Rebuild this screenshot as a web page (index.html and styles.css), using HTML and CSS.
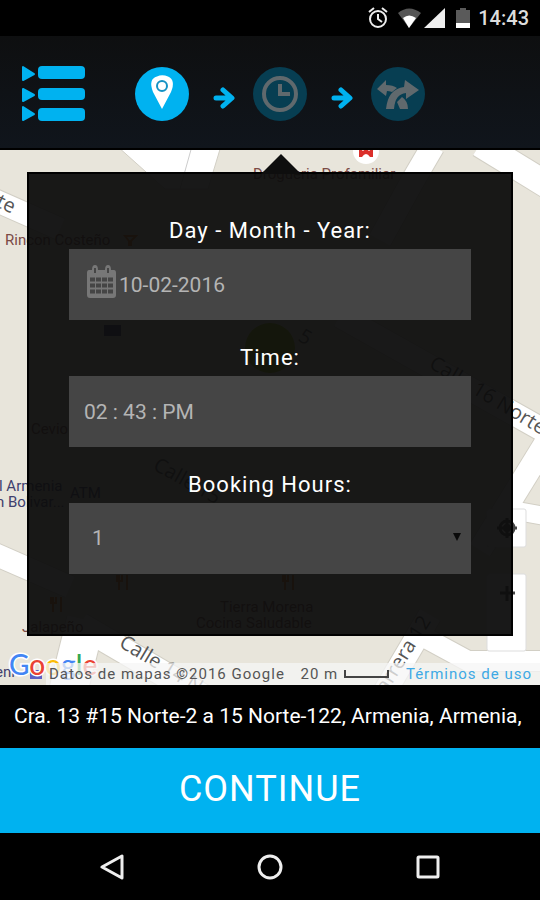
FILE: index.html
```html
<!DOCTYPE html>
<html lang="en">
<head>
    <meta charset="UTF-8">
    <meta name="viewport" content="width=device-width, initial-scale=1.0">
    <title>Booking</title>
    <link rel="stylesheet" href="styles.css">
</head>
<body>
    <div class="status-bar">
        <svg width="110" height="24" viewBox="0 0 110 24" aria-hidden="true">
            <!-- alarm -->
            <g fill="none" stroke="#eee" stroke-width="2">
                <circle cx="10" cy="13" r="8"/>
                <path d="M10 8v5l4 3M1 6l5-4M19 6l-5-4"/>
            </g>
            <!-- wifi -->
            <path d="M30 7q11-9 23 0l-12 15z" fill="#555"/>
            <path d="M35 12q6-5 13 0l-7 10z" fill="#fff"/>
            <!-- signal -->
            <path d="M56 22L77 2v20z" fill="#eee"/>
            <!-- battery -->
            <path d="M88 4h4V2h6v2h4v18H88z" fill="#5a5a5a"/>
            <path d="M88 17h14v5H88z" fill="#fff"/>
        </svg>
        <span class="clock">14:43</span>
    </div>

    <header class="top-bar">
        <button class="menu-btn" aria-label="Menu">
            <svg width="63" height="58" viewBox="0 0 63 58" fill="#00b2f0" stroke="#00b2f0" stroke-linejoin="round">
                <path d="M1 2v13l11-6zM1 24v12l11-6zM1 42v13l11-6z" stroke-width="2"/>
                <rect x="16" y="1" width="47" height="13" rx="4" stroke="none"/>
                <rect x="16" y="23" width="47" height="12" rx="4" stroke="none"/>
                <rect x="16" y="43" width="47" height="13" rx="4" stroke="none"/>
            </svg>
        </button>
        <nav class="steps">
            <button class="step active" aria-label="Location">
                <svg width="54" height="54" viewBox="0 0 54 54">
                    <path d="M27 42L18 25Q13 12 22 9.500Q27 7 33 9.500Q41 13 36 25z" fill="#fff"/>
                    <circle cx="27" cy="19" r="5" fill="#fff" stroke="#1592c4" stroke-width="2"/>
                </svg>
            </button>
            <svg class="arrow" width="22" height="32" viewBox="0 0 22 32" aria-hidden="true">
                <path d="M3 20h15M10 12l9 8-9 8" />
            </svg>
            <button class="step" aria-label="Time">
                <svg width="54" height="54" viewBox="0 0 54 54" fill="none" stroke="#60696d">
                    <circle cx="27" cy="27" r="16" stroke-width="4"/>
                    <path d="M27 17v10h10" stroke-width="4"/>
                </svg>
            </button>
            <svg class="arrow" width="22" height="32" viewBox="0 0 22 32" aria-hidden="true">
                <path d="M3 20h15M10 12l9 8-9 8" />
            </svg>
            <button class="step" aria-label="Route">
                <svg width="54" height="54" viewBox="0 0 54 54" fill="#60696d">
                    <path d="M15 42Q17 22 33 20l1-7 14 10-13 9v-6Q24 27 23 42z"/>
                    <path d="M6 22l9-9v5q7 0 11 3l-5 4q-3-1-5-1l-1 5zM31 30q6 4 6 12h-8l-3-7z"/>
                </svg>
            </button>
        </nav>
    </header>

    <main class="map-area">
        <svg class="map" viewBox="0 150 540 535" preserveAspectRatio="xMidYMid slice" aria-hidden="true">
            <path d="M117 146L165 189L208 189L221 146z" fill="#fff" stroke="#d2cfc5"/>
            <path d="M192 146l-12 43" stroke="#ccc"/>
            <g class="road-edge">
                <path d="M480 144L570 199" stroke-width="28"/>
                <path d="M433 146L412 182L380 240" stroke-width="25"/>
                <path d="M-10 198L60 229" stroke-width="24"/>
                <path d="M340 316L550 434" stroke-width="25"/>
                <path d="M560 420L480 550" stroke-width="25"/>
                <path d="M500 508L550 517" stroke-width="20"/>
                <path d="M-10 552L70 587" stroke-width="24"/>
                <path d="M86 620L66 700" stroke-width="40"/>
                <path d="M80 625L210 701" stroke-width="27"/>
                <path d="M430 615L380 700" stroke-width="25"/>
                <path d="M420 635L468 661L550 661" stroke-width="22"/>
            </g>
            <g class="road">
                <path d="M480 144L570 199" stroke-width="26"/>
                <path d="M433 146L412 182L380 240" stroke-width="23"/>
                <path d="M-10 198L60 229" stroke-width="22"/>
                <path d="M340 316L550 434" stroke-width="23"/>
                <path d="M560 420L480 550" stroke-width="23"/>
                <path d="M500 508L550 517" stroke-width="18"/>
                <path d="M-10 552L70 587" stroke-width="22"/>
                <path d="M86 620L66 700" stroke-width="38"/>
                <path d="M80 625L210 701" stroke-width="25"/>
                <path d="M430 615L380 700" stroke-width="23"/>
                <path d="M420 635L468 661L550 661" stroke-width="20"/>
            </g>

            <!-- map controls -->
            <g fill="#fff" stroke="#ddd">
                <rect x="487" y="509" width="39" height="38" rx="2"/>
                <rect x="487" y="574" width="39" height="77" rx="2"/>
            </g>
            <g fill="none" stroke="#444" stroke-width="3">
                <circle cx="507" cy="528" r="7"/>
                <path d="M507 518v20M497 528h20M500 593h15M507 586v15"/>
            </g>
            <circle cx="507" cy="528" r="4" fill="#444"/>

            <!-- places -->
            <circle cx="270" cy="348" r="25" fill="#9bc400"/>
            <circle cx="366" cy="151" r="13" fill="#fff"/>
            <path d="M359 148l4 3q3-3 6 0l4-3v9h-14z" fill="#db2f2a"/>
            <path d="M362 157q4-6 8 0z" fill="#fff"/>
            <path d="M125 236h11l-5 5v4h-2v-4zM117 575v6h5v-6m-3 0v15M127 575v15M51 597v6h5v-6m-3 0v15M61 597v15M283 575v6h5v-6m-3 0v15M293 575v15" fill="none" stroke="#e57a1c" stroke-width="2"/>
            <rect x="104" y="325" width="17" height="11" fill="#447"/>
            <rect x="30" y="670" width="12" height="9" fill="#5b5fc4"/>

            <g class="place">
                <text x="5" y="245">Rincon Costeño</text>
                <text x="253" y="179">Drogueria Profamiliar</text>
                <text x="31" y="434">Cevio</text>
                <text x="22" y="632">Jalapeño</text>
                <text x="220" y="612">Tierra Morena</text>
                <text x="196" y="628">Cocina Saludable</text>
            </g>
            <g class="place blue">
                <text x="-1" y="491">l Armenia</text>
                <text x="-4" y="507">n Bolivar...</text>
                <text x="70" y="498">ATM</text>
                <text x="-5" y="677">eni</text>
            </g>
            <g class="street">
                <text transform="translate(-5 206) rotate(25)">te</text>
                <text transform="translate(428 367) rotate(31)">Calle 16 Norte</text>
                <text transform="translate(152 469) rotate(29)">Calle 15</text>
                <text transform="translate(118 646) rotate(31)">Calle 14 N</text>
                <text transform="translate(386 694) rotate(-58)">arrera 12</text>
                <text transform="translate(297 340) rotate(30)">5</text>
            </g>
            <text class="logo" x="9" y="675"><tspan fill="#4285f4">G</tspan><tspan fill="#ea4335">o</tspan><tspan fill="#fbbc05">o</tspan><tspan fill="#4285f4">g</tspan><tspan fill="#34a853">l</tspan><tspan fill="#ea4335">e</tspan></text>
        </svg>

        <form class="booking">
            <label for="date">Day - Month - Year:</label>
            <div class="field">
                <svg class="calendar" width="31" height="34" viewBox="0 0 31 34" aria-hidden="true">
                    <path d="M3 5h3q0-5 3-5t3 5h7q0-5 3-5t3 5h3q2 0 2 3v22q0 3-3 3H4q-3 0-3-3V8q0-3 2-3z" fill="#777"/>
                    <path d="M9 3v5M22 3v5" stroke="#454545" stroke-width="2"/>
                    <path d="M4 14.500h23M4 20.500h23M4 26.500h23" stroke="#454545" stroke-width="4" stroke-dasharray="5 1"/>
                </svg>
                <input type="text" id="date" value="10-02-2016">
            </div>
            <label for="time">Time:</label>
            <div class="field">
                <input type="text" id="time" value="02 : 43 : PM">
            </div>
            <label for="hours">Booking Hours:</label>
            <div class="field hours">
                <select id="hours">
                    <option>1</option>
                    <option>2</option>
                    <option>3</option>
                </select>
                <svg width="10" height="10" viewBox="0 0 10 10" aria-hidden="true"><path d="M1 0h8L5 8z" fill="#0a0a0a"/></svg>
            </div>
        </form>

        <div class="attribution">
            <span>Datos de mapas ©2016 Google</span>
            <span class="scale">20 m
                <svg width="46" height="10" viewBox="0 0 46 10" aria-hidden="true"><path d="M1 1v7h43V1" fill="none" stroke="#444" stroke-width="2"/></svg>
            </span>
            <a href="#">Términos de uso</a>
        </div>
    </main>

    <p class="address">Cra. 13 #15 Norte-2 a 15 Norte-122, Armenia, Armenia,</p>
    <button class="continue-btn">CONTINUE</button>

    <nav class="system-nav">
        <button aria-label="Back">
            <svg width="26" height="26" viewBox="0 0 26 26"><path d="M3 13L23 2v22z"/></svg>
        </button>
        <button aria-label="Home">
            <svg width="26" height="26" viewBox="0 0 26 26"><circle cx="13" cy="13" r="11"/></svg>
        </button>
        <button aria-label="Recent apps">
            <svg width="26" height="26" viewBox="0 0 26 26"><rect x="3" y="3" width="20" height="20" rx="1"/></svg>
        </button>
    </nav>
</body>
</html>
```

FILE: styles.css
```css
* {
    box-sizing: border-box;
}

body {
    display: flex;
    flex-direction: column;
    min-height: 100vh;
    margin: 0;
    background-color: #000;
    color: #fff;
    font-family: Roboto, "Liberation Sans", sans-serif;
    font-size: 21px;
}

button {
    padding: 0;
    border: none;
    background: none;
    color: inherit;
    font-family: inherit;
    cursor: pointer;
}

svg {
    display: block;
}

.status-bar {
    display: flex;
    justify-content: flex-end;
    align-items: center;
    height: 36px;
    padding-right: 11px;
}

.clock {
    font-size: 20px;
    font-weight: 500;
    color: #ddd;
}

.top-bar {
    display: flex;
    align-items: center;
    gap: 50px;
    height: 114px;
    padding: 4px 22px 0;
    background: linear-gradient(#0e0f10, #10151c);
    border-bottom: 2px solid #000;
}

.steps {
    display: flex;
    align-items: center;
}

.step {
    width: 54px;
    height: 54px;
    border-radius: 50%;
    background-color: #073e52;
}

.step.active {
    background-color: #00b2f0;
}

.arrow {
    margin: 0 18px 0 24px;
    fill: none;
    stroke: #00b2f0;
    stroke-width: 5;
    stroke-linecap: round;
    stroke-linejoin: round;
}

/* Map */
.map-area {
    position: relative;
    display: flex;
    flex: 1;
    flex-direction: column;
    padding-top: 22px;
    background-color: #e8e5db;
}

.map {
    position: absolute;
    inset: 0;
    width: 100%;
    height: 100%;
}

.road-edge,
.road {
    fill: none;
    stroke: #fff;
}

.road-edge {
    stroke: #d2cfc5;
}

.place {
    fill: #7b4a45;
    font-size: 15px;
}

.place.blue {
    fill: #40406e;
}

.street {
    fill: #555;
    font-family: "Open Sans", sans-serif;
    font-size: 20px;
}

.logo {
    font-family: Lato, sans-serif;
    font-size: 28px;
    font-weight: 500;
    stroke: #fff;
    stroke-width: 3px;
    paint-order: stroke;
}

/* Booking form */
.booking {
    position: relative;
    display: flex;
    flex-direction: column;
    margin: 0 27px;
    padding: 19px 40px 60px;
    background-color: rgba(13, 13, 13, 0.95);
    border: 2px solid #000;
}

.booking::before {
    content: "";
    position: absolute;
    bottom: 100%;
    left: 52%;
    margin-left: -19px;
    border: 20px solid transparent;
    border-top: none;
    border-bottom-color: #0e0e0e;
}

.booking label {
    padding: 25px 0 5px;
    font-size: 22px;
    line-height: 26px;
    letter-spacing: 1px;
    text-align: center;
}

.field {
    display: flex;
    align-items: center;
    height: 71px;
    padding: 0 15px;
    background-color: #454545;
}

.calendar {
    flex: none;
    margin: 0 2px 6px 2px;
}

.field input,
.field select {
    flex: 1;
    min-width: 0;
    height: 100%;
    padding: 0;
    border: none;
    background: none;
    color: #b4b4b4;
    font-family: inherit;
    font-size: 21px;
    appearance: none;
}

.hours {
    padding: 0 9px 2px 23px;
}

.attribution {
    position: relative;
    display: flex;
    justify-content: space-between;
    align-items: center;
    height: 22px;
    margin: auto 0 0 46px;
    padding: 0 8px 0 3px;
    background-color: rgba(245, 245, 245, 0.75);
    color: #555;
    font-size: 15px;
    letter-spacing: 1px;
    white-space: nowrap;
}

.scale {
    display: flex;
    align-items: center;
    gap: 6px;
}

.attribution a {
    color: #3ea9e5;
    text-decoration: none;
}

.address {
    margin: 0;
    padding: 18px 14px 19px;
    line-height: 26px;
    white-space: nowrap;
}

.continue-btn {
    height: 85px;
    padding-bottom: 4px;
    background-color: #00b2f0;
    font-size: 36px;
    letter-spacing: 1px;
}

.system-nav {
    display: flex;
    height: 67px;
    padding: 0 33px;
}

.system-nav button {
    display: flex;
    flex: 1;
    justify-content: center;
    align-items: center;
}

.system-nav svg {
    fill: none;
    stroke: #eee;
    stroke-width: 3;
    stroke-linejoin: round;
}
```
